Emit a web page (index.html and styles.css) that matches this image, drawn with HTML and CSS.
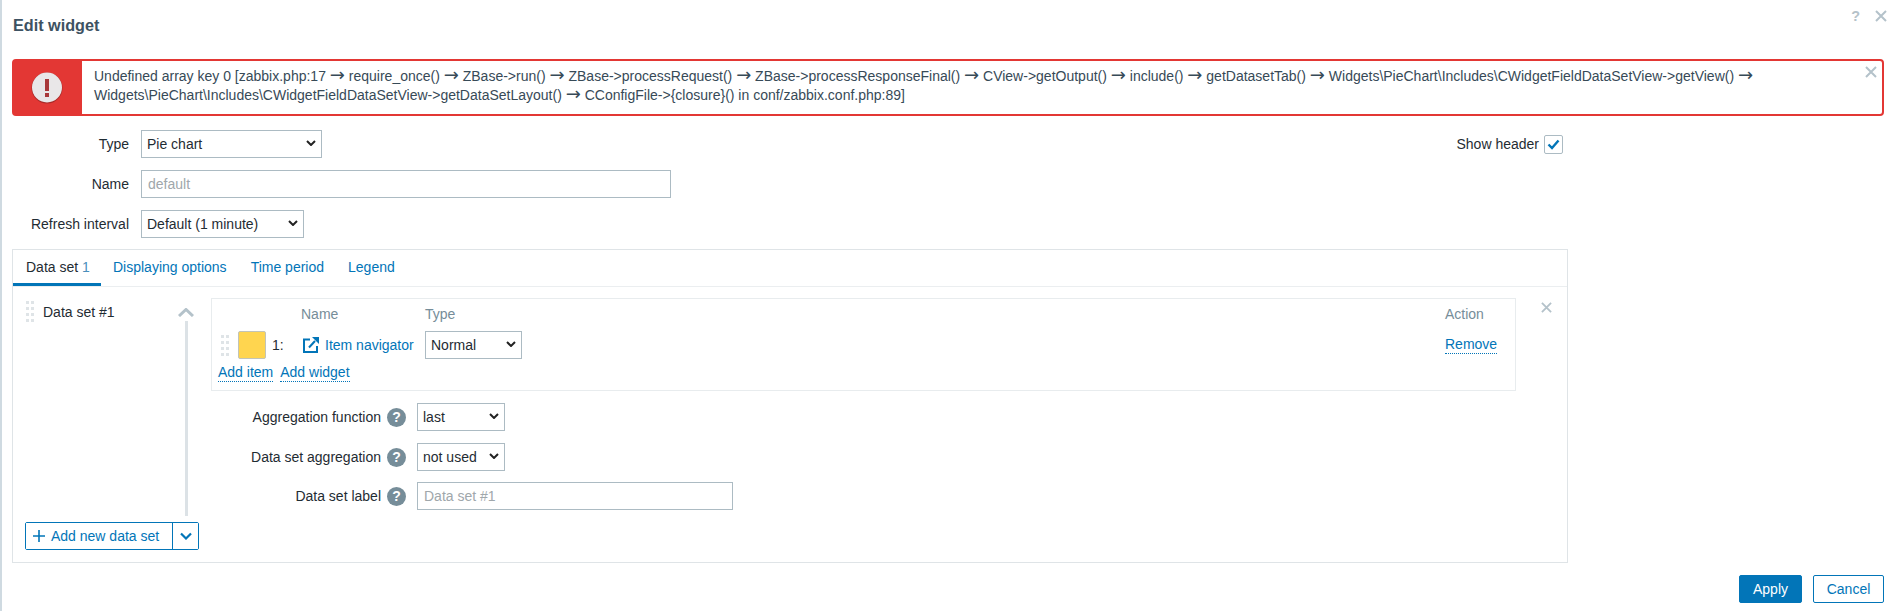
FILE: index.html
```html
<!DOCTYPE html>
<html lang="en">
<head>
<meta charset="utf-8">
<title>Edit widget</title>
<link rel="stylesheet" href="styles.css">
</head>
<body>
<div class="dialog">
  <header class="dialog-header">
    <h4 class="dialog-title">Edit widget</h4>
    <div class="dialog-actions">
      <span class="help-mark">?</span>
      <svg class="x-icon" width="12" height="12" viewBox="0 0 12 12"><path d="M1 1l10 10M11 1L1 11"/></svg>
    </div>
  </header>

  <div class="alert">
    <div class="alert-icon">
      <svg width="34" height="34" viewBox="0 0 34 34">
        <circle cx="17" cy="17" r="15.5" fill="#a92a28"/>
        <circle cx="17" cy="16.5" r="15" fill="#e9e7e8"/>
        <rect x="15" y="8" width="4" height="12" fill="#a8383a"/>
        <rect x="15" y="22" width="4" height="4" fill="#a8383a"/>
      </svg>
    </div>
    <div class="alert-text">Undefined array key 0 [zabbix.php:17 <span class="arrow">→</span> require_once() <span class="arrow">→</span> ZBase-&gt;run() <span class="arrow">→</span> ZBase-&gt;processRequest() <span class="arrow">→</span> ZBase-&gt;processResponseFinal() <span class="arrow">→</span> CView-&gt;getOutput() <span class="arrow">→</span> include() <span class="arrow">→</span> getDatasetTab() <span class="arrow">→</span> Widgets\PieChart\Includes\CWidgetFieldDataSetView-&gt;getView() <span class="arrow">→</span> Widgets\PieChart\Includes\CWidgetFieldDataSetView-&gt;getDataSetLayout() <span class="arrow">→</span> CConfigFile-&gt;{closure}() in conf/zabbix.conf.php:89]</div>
    <svg class="x-icon alert-close" width="12" height="12" viewBox="0 0 12 12"><path d="M1 1l10 10M11 1L1 11"/></svg>
  </div>

  <form class="form">
    <div class="form-row">
      <label class="form-label">Type</label>
      <div class="select-wrap w-type">
        <select class="select"><option>Pie chart</option></select>
        <svg class="select-arrow" width="10" height="6" viewBox="0 0 10 6"><path d="M1 1l4 4 4-4"/></svg>
      </div>
      <div class="show-header">
        <span>Show header</span>
        <span class="checkbox">
          <svg width="13" height="11" viewBox="0 0 13 11"><path d="M1.5 5.5l3.5 3.5 6.5-7.5"/></svg>
        </span>
      </div>
    </div>
    <div class="form-row">
      <label class="form-label">Name</label>
      <input class="input w-name" type="text" placeholder="default">
    </div>
    <div class="form-row">
      <label class="form-label">Refresh interval</label>
      <div class="select-wrap w-refresh">
        <select class="select"><option>Default (1 minute)</option></select>
        <svg class="select-arrow" width="10" height="6" viewBox="0 0 10 6"><path d="M1 1l4 4 4-4"/></svg>
      </div>
    </div>

    <section class="panel">
      <ul class="tabs">
        <li class="tab tab-active">Data set <span class="tab-count">1</span></li>
        <li class="tab">Displaying options</li>
        <li class="tab">Time period</li>
        <li class="tab">Legend</li>
      </ul>
      <div class="panel-body">
        <aside class="sidebar">
          <div class="ds-item">
            <div class="ds-head">
              <svg class="grip" width="8" height="21" viewBox="0 0 8 21"><path d="M0 0h3v3H0zM5 0h3v3H5zM0 6h3v3H0zM5 6h3v3H5zM0 12h3v3H0zM5 12h3v3H5zM0 18h3v3H0zM5 18h3v3H5z"/></svg>
              <span>Data set #1</span>
            </div>
            <div class="ds-collapse">
              <svg class="ds-chevron" width="16" height="9" viewBox="0 0 16 9"><path d="M1 8l7-6.5L15 8"/></svg>
              <div class="ds-line"></div>
            </div>
          </div>
          <div class="split-button">
            <button type="button" class="split-main">
              <svg width="12" height="12" viewBox="0 0 12 12"><path d="M6 0v12M0 6h12"/></svg>
              Add new data set
            </button>
            <button type="button" class="split-toggle">
              <svg width="12" height="8" viewBox="0 0 12 8"><path d="M1 1.5l5 5 5-5"/></svg>
            </button>
          </div>
        </aside>

        <div class="ds-main">
          <div class="ds-content">
            <div class="items-box">
              <div class="items-grid">
                <span></span><span></span><span></span>
                <span class="col-head">Name</span>
                <span class="col-head">Type</span>
                <span class="col-head">Action</span>

                <svg class="grip" width="8" height="21" viewBox="0 0 8 21"><path d="M0 0h3v3H0zM5 0h3v3H5zM0 6h3v3H0zM5 6h3v3H5zM0 12h3v3H0zM5 12h3v3H5zM0 18h3v3H0zM5 18h3v3H5z"/></svg>
                <span class="swatch"></span>
                <span class="item-index">1:</span>
                <a class="item-link">
                  <svg class="nav-icon" width="16" height="16" viewBox="0 0 16 16"><path class="nav-box" d="M7 2.5H1v12.5h13V9"/><path class="nav-arrow" d="M6 10.5l6-6.5"/><path class="nav-head" d="M9 0h7v7z"/></svg>
                  Item navigator
                </a>
                <div class="select-wrap w-normal">
                  <select class="select"><option>Normal</option></select>
                  <svg class="select-arrow" width="10" height="6" viewBox="0 0 10 6"><path d="M1 1l4 4 4-4"/></svg>
                </div>
                <a class="dotted-link">Remove</a>
              </div>
              <div class="items-footer">
                <a class="dotted-link">Add item</a>
                <a class="dotted-link">Add widget</a>
              </div>
            </div>

            <div class="ds-fields">
              <div class="ds-field">
                <label class="ds-label">Aggregation function</label>
                <span class="help-icon">?</span>
                <div class="select-wrap w-agg">
                  <select class="select"><option>last</option></select>
                  <svg class="select-arrow" width="10" height="6" viewBox="0 0 10 6"><path d="M1 1l4 4 4-4"/></svg>
                </div>
              </div>
              <div class="ds-field">
                <label class="ds-label">Data set aggregation</label>
                <span class="help-icon">?</span>
                <div class="select-wrap w-agg">
                  <select class="select"><option>not used</option></select>
                  <svg class="select-arrow" width="10" height="6" viewBox="0 0 10 6"><path d="M1 1l4 4 4-4"/></svg>
                </div>
              </div>
              <div class="ds-field ds-field-last">
                <label class="ds-label">Data set label</label>
                <span class="help-icon">?</span>
                <input class="input w-label" type="text" placeholder="Data set #1">
              </div>
            </div>
          </div>
          <svg class="x-icon ds-remove" width="11" height="11" viewBox="0 0 12 12"><path d="M1 1l10 10M11 1L1 11"/></svg>
        </div>
      </div>
    </section>
  </form>

  <footer class="dialog-footer">
    <button type="button" class="btn btn-primary">Apply</button>
    <button type="button" class="btn btn-alt">Cancel</button>
  </footer>
</div>
</body>
</html>
```

FILE: styles.css
```css
* { box-sizing: border-box; }
html, body { margin: 0; padding: 0; height: 100%; overflow: hidden; background: #fff; }
body { font: 14px/20px "Liberation Sans", Arial, sans-serif; color: #1f2c33; }

.dialog { height: 611px; border-left: 2px solid #cfdae1; padding: 0 11px 0 10px; display: flex; flex-direction: column; }

.dialog-header { height: 59px; display: flex; justify-content: space-between; align-items: flex-start; }
.dialog-title { margin: 15px 0 0 1px; font-size: 16.2px; line-height: 20px; font-weight: bold; color: #3d5262; }
.dialog-actions { display: flex; align-items: center; gap: 15px; margin: 6px -3px 0 0; height: 20px; }
.help-mark { color: #b5c2c9; font-size: 14.4px; font-weight: bold; }
.x-icon { display: block; flex: none; }
.x-icon path { fill: none; stroke: #b4c2ca; stroke-width: 2; }

.alert { position: relative; height: 57px; border: 2px solid #e33734; border-radius: 4px; display: flex; flex: none; }
.alert-icon { width: 68px; flex: none; background: #e33734; display: flex; align-items: center; justify-content: center; padding-right: 2px; }
.alert-text { padding: 6px 30px 0 12px; line-height: 19px; color: #374a57; }
.arrow { font-family: "DejaVu Sans", sans-serif; font-size: 18px; line-height: 0; }
.alert-close { position: absolute; top: 5px; right: 5px; }

.form { width: 1556px; padding-top: 14px; display: flex; flex-direction: column; gap: 12px; }
.form-row { display: flex; align-items: center; gap: 12px; height: 28px; }
.form-label { width: 117px; text-align: right; flex: none; }

.select-wrap { position: relative; height: 28px; flex: none; }
.select { appearance: none; width: 100%; height: 100%; border: 1px solid #acbbc3; border-radius: 0; background: #fff; padding: 0 5px; font: inherit; color: #1f2c33; }
.select-arrow { position: absolute; right: 6px; top: 10px; pointer-events: none; }
.select-arrow path { fill: none; stroke: #222; stroke-width: 2; }
.w-type { width: 181px; }
.w-refresh { width: 163px; }
.w-normal { width: 97px; }
.w-agg { width: 88px; }

.input { height: 28px; border: 1px solid #acbbc3; border-radius: 0; padding: 0 6px; font: inherit; color: #1f2c33; background: #fff; }
.input::placeholder { color: #a0a7ab; opacity: 1; }
.w-name { width: 530px; }
.w-label { width: 316px; }

.show-header { margin-left: auto; margin-right: 5px; display: flex; align-items: center; gap: 5px; }
.checkbox { width: 19px; height: 19px; border: 1px solid #acbbc3; border-radius: 2px; display: flex; align-items: center; justify-content: center; }
.checkbox path { fill: none; stroke: #0275b8; stroke-width: 2.4; }

.panel { margin-top: -1px; height: 314px; border: 1px solid #dfe4e7; }
.tabs { list-style: none; margin: 0; padding: 0; display: flex; border-bottom: 1px solid #ebeef0; }
.tab { height: 36px; padding: 7px 12px 0; color: #0275b8; border-bottom: 3px solid transparent; white-space: nowrap; }
.tab-active { width: 88px; padding: 7px 0 0 13px; color: #1f2c33; border-bottom-color: #0275b8; }
.tab-count { color: #4a8fbb; }

.panel-body { display: flex; height: 275px; }
.sidebar { width: 198px; flex: none; padding: 14px 12px 12px; display: flex; flex-direction: column; }
.ds-item { flex: 1; display: flex; min-height: 0; }
.ds-head { flex: 1; display: flex; align-items: flex-start; gap: 9px; padding-left: 1px; }
.ds-head span { line-height: 20px; margin-top: 1px; }
.grip { display: block; flex: none; }
.grip path { fill: #dfe4e7; }
.ds-collapse { width: 16px; margin-right: 5px; display: flex; flex-direction: column; align-items: center; margin-bottom: 6px; }
.ds-chevron { margin-top: 7px; flex: none; }
.ds-chevron path { fill: none; stroke: #b4c2ca; stroke-width: 3; }
.ds-line { width: 3px; flex: 1; margin-top: 4px; background: #dce2e6; }

.split-button { display: flex; height: 28px; border: 1px solid #0275b8; border-radius: 2px; }
.split-main, .split-toggle { border: 0; background: #fff; padding: 0; font: inherit; color: #0275b8; display: flex; align-items: center; }
.split-main { width: 147px; padding-left: 7px; gap: 6px; border-right: 1px solid #0275b8; }
.split-main path { fill: none; stroke: #0275b8; stroke-width: 1.6; }
.split-toggle { flex: 1; justify-content: center; }
.split-toggle path { fill: none; stroke: #0275b8; stroke-width: 2.2; }

.ds-main { flex: 1; padding-top: 11px; display: flex; gap: 25px; align-items: flex-start; }
.ds-remove { margin-top: 4px; }
.ds-content { width: 1305px; flex: none; }
.items-box { height: 93px; border: 1px solid #e8ecee; padding: 5px 0 0 9px; }
.items-grid { display: grid; grid-template-columns: 17px 35px 28px 124px 1020px 1fr; row-gap: 7px; align-items: center; }
.col-head { color: #768d99; }
.swatch { width: 28px; height: 28px; background: #ffd54f; border: 1px solid #c2c4b8; border-radius: 2px; }
.item-index { margin-left: -1px; }
.item-link { color: #0275b8; display: flex; align-items: center; gap: 6px; margin-left: 2px; }
.nav-icon { flex: none; }
.nav-box, .nav-arrow { fill: none; stroke: #0275b8; stroke-width: 2; }
.nav-head { fill: #0275b8; }
.dotted-link { justify-self: start; color: #0275b8; border-bottom: 1px dotted #0275b8; line-height: 17px; }
.items-footer { display: flex; gap: 7px; margin: 5px 0 0 -3px; }

.ds-fields { margin-top: 12px; display: flex; flex-direction: column; gap: 12px; }
.ds-field { display: flex; align-items: center; height: 28px; }
.ds-field-last { margin-top: -1px; }
.ds-label { width: 170px; text-align: right; margin-right: 6px; }
.help-icon { width: 19px; height: 19px; border-radius: 50%; background: #768d99; color: #fff; font-weight: bold; font-size: 14px; line-height: 19px; text-align: center; margin-right: 11px; flex: none; }

.dialog-footer { margin-top: 12px; display: flex; justify-content: flex-end; gap: 11px; }
.btn { height: 28px; border-radius: 2px; font: inherit; padding: 0; }
.btn-primary { width: 63px; background: #0275b8; border: 1px solid #0275b8; color: #fff; }
.btn-alt { width: 71px; background: #fff; border: 1px solid #0275b8; color: #0275b8; }
```
